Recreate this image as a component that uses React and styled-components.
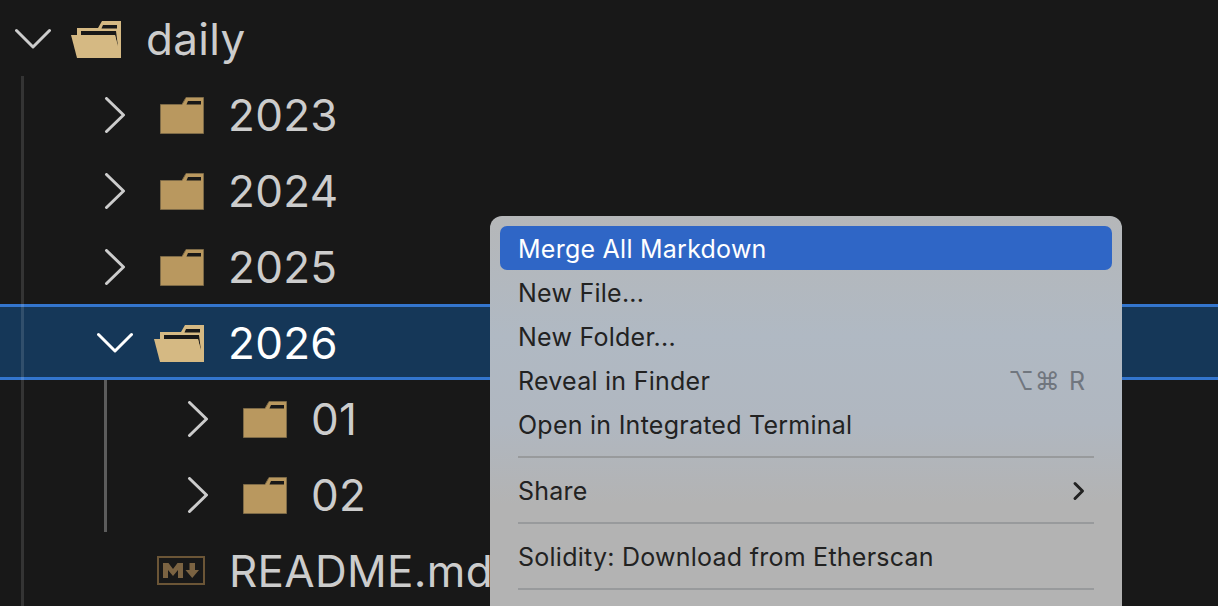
import React from 'react'
import styled, { createGlobalStyle } from 'styled-components'

const Global = createGlobalStyle`
html, body { margin: 0; padding: 0; background: #181818; }
`

const Page = styled.div`
position: relative;
width: 1218px;
height: 606px;
overflow: hidden;
background: #181818;
font-family: Inter, 'Liberation Sans', sans-serif;
`
const Group = styled.div`
position: relative;
&::before {
  content: '';
  position: absolute;
  z-index: 1;
  left: ${p => p.$guide}px;
  top: 0;
  height: ${p => p.$height};
  width: 3px;
  background: ${p => p.$color};
}
`
const Row = styled.div`
position: relative;
height: 76px;
box-sizing: border-box;
display: flex;
align-items: center;
padding: 2px 0 0 ${p => p.$indent}px;
color: ${p => (p.$selected ? '#ffffff' : '#cccccc')};
background: ${p => (p.$selected ? '#153758' : 'transparent')};
box-shadow: ${p => (p.$selected ? 'inset 0 3px 0 #3375cd, inset 0 -3px 0 #3375cd' : 'none')};
`
const Twist = styled.svg`
width: 36px;
height: 36px;
flex: none;
`
const IconSlot = styled.div`
width: 50px;
height: 40px;
margin-left: ${p => p.$gap}px;
flex: none;
display: flex;
align-items: center;
justify-content: flex-end;
`
const Label = styled.span`
margin-left: ${p => p.$gap || 24}px;
font-size: 44px;
letter-spacing: 0.3px;
line-height: 1;
white-space: nowrap;
`

const Menu = styled.div`
position: absolute;
z-index: 2;
left: 490px;
top: 216px;
width: 632px;
height: 400px;
box-sizing: border-box;
padding: 10px;
border-radius: 12px 12px 0 0;
background: linear-gradient(180deg, #b5b7b9 0%, #b0b9c3 30%, #b0b7c0 52%, #b3b3b3 72%, #b3b3b3 100%);
font-family: Inter, 'Liberation Sans', sans-serif;
font-size: 25px;
letter-spacing: 0.25px;
color: #222222;
`
const Item = styled.div`
height: 44px;
box-sizing: border-box;
padding: 2px 18px 0;
border-radius: 7px;
display: flex;
align-items: center;
justify-content: space-between;
white-space: nowrap;
background: ${p => (p.$active ? '#2f66c6' : 'transparent')};
color: ${p => (p.$active ? '#ffffff' : '#222222')};
`
const Keys = styled.span`
margin-right: 8px;
color: #70767e;
letter-spacing: 1px;
`
const SubArrow = styled.svg`
margin-right: 8px;
width: 14px;
height: 20px;
`
const Divider = styled.div`
height: 2px;
margin: 10px 18px;
background: #989a9c;
`

const ChevronRight = () => (
  <Twist viewBox="0 0 36 36" fill="none" stroke="currentColor" strokeWidth="3" strokeLinecap="round" strokeLinejoin="round">
    <path d="M9.5 1.5 L26.5 18 L9.5 34.5" />
  </Twist>
)
const ChevronDown = () => (
  <Twist viewBox="0 0 36 36" fill="none" stroke="currentColor" strokeWidth="3" strokeLinecap="round" strokeLinejoin="round">
    <path d="M1.5 9.5 L18 26 L34.5 9.5" />
  </Twist>
)
const FolderClosed = () => (
  <svg width="44" height="37" viewBox="0 0 44 37">
    <path d="M0.5 7.5 H22 L26 0.5 H43.5 V36.5 H0.5 Z" fill="#b9985f" stroke="#7d6a47" strokeWidth="1" />
    <path d="M28 4 H41 V7.5 H26.5 Z" fill="#181818" />
  </svg>
)
const FolderOpen = () => (
  <svg width="50" height="37" viewBox="0 0 50 37">
    <path d="M6 7 H27 L31 0 H50 V37 H6 Z" fill="#d5b983" />
    <path d="M32 4 H46 V7.5 H30.5 Z" fill="#181818" />
    <path d="M10 10 H45 L47 26 L44 14 H10 Z" fill="#181818" />
    <path d="M0 14 H44 L47 26 V37 H6 Z" fill="#d5b983" />
  </svg>
)
const MarkdownIcon = () => (
  <svg width="48" height="30" viewBox="0 0 48 30">
    <rect x="1" y="1" width="46" height="27" fill="none" stroke="#6b5536" strokeWidth="2" />
    <path d="M6 22 V7 H11.5 L16 13 L20.5 7 H26 V22 H21 V14 L16 20 L11 14 V22 Z" fill="#7b6342" />
    <path d="M32.5 7 H38 V14 H42 L35.25 22 L28.5 14 H32.5 Z" fill="#7b6342" />
  </svg>
)

const years = ['2023', '2024', '2025']
const months = ['01', '02']

export default function App() {
  return (
    <Page>
      <Global />
      <Row $indent={15}>
        <ChevronDown />
        <IconSlot $gap={20}><FolderOpen /></IconSlot>
        <Label $gap={25}>daily</Label>
      </Row>
      <Group $guide={21} $height="100%" $color="rgba(255,255,255,0.12)">
        {years.map(y => (
          <Row key={y} $indent={97}>
            <ChevronRight />
            <IconSlot $gap={21}><FolderClosed /></IconSlot>
            <Label>{y}</Label>
          </Row>
        ))}
        <Row $indent={97} $selected>
          <ChevronDown />
          <IconSlot $gap={21}><FolderOpen /></IconSlot>
          <Label>2026</Label>
        </Row>
        <Group $guide={104} $height="152px" $color="#5c5c5c">
          {months.map(m => (
            <Row key={m} $indent={180}>
              <ChevronRight />
              <IconSlot $gap={21}><FolderClosed /></IconSlot>
              <Label>{m}</Label>
            </Row>
          ))}
        </Group>
        <Row $indent={157}>
          <MarkdownIcon />
          <Label>README.md</Label>
        </Row>
      </Group>
      <Menu>
        <Item $active>Merge All Markdown</Item>
        <Item>New File...</Item>
        <Item>New Folder...</Item>
        <Item>Reveal in Finder<Keys>⌥⌘ R</Keys></Item>
        <Item>Open in Integrated Terminal</Item>
        <Divider />
        <Item>
          Share
          <SubArrow viewBox="0 0 14 20" fill="none" stroke="#222" strokeWidth="3" strokeLinecap="round" strokeLinejoin="round">
            <path d="M3 2.5 L10.5 10 L3 17.5" />
          </SubArrow>
        </Item>
        <Divider />
        <Item>Solidity: Download from Etherscan</Item>
        <Divider />
      </Menu>
    </Page>
  )
}
